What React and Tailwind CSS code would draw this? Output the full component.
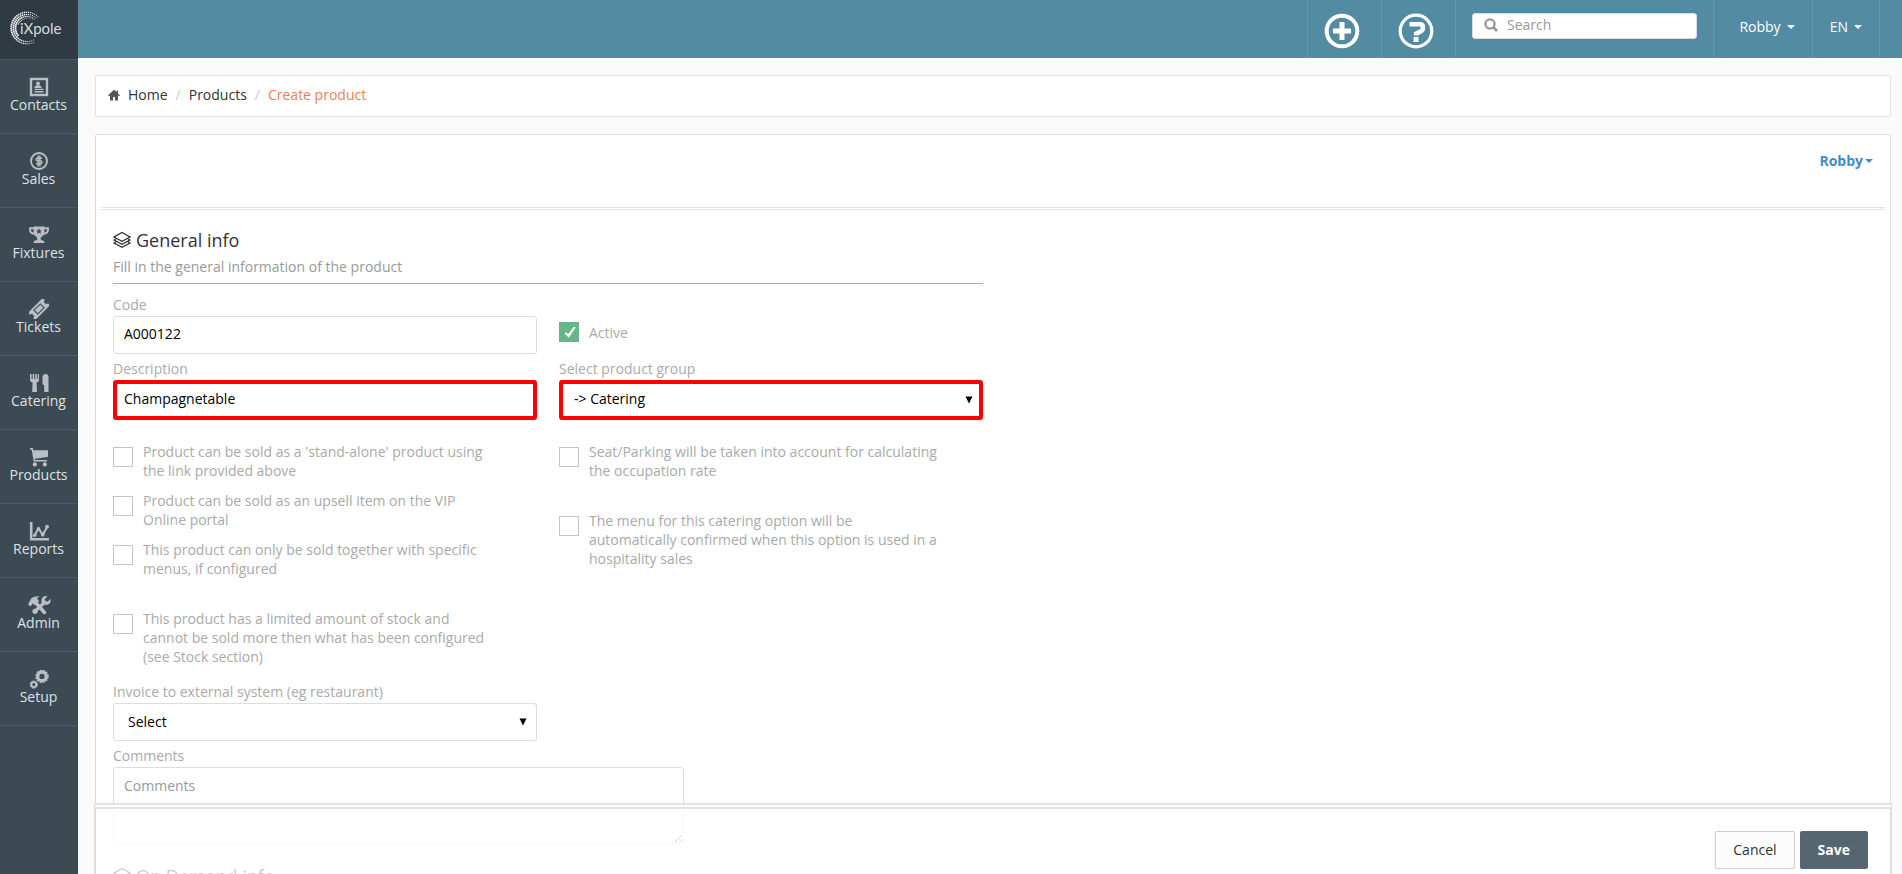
import React, { useState } from 'react';

const iconProps = {
  viewBox: '0 0 20 20',
  className: 'w-5 h-5 text-[#b9bfc4]',
  fill: 'none',
  stroke: 'currentColor',
  'aria-hidden': true,
};

const ContactsIcon = () => (
  <svg {...iconProps}>
    <rect x="2" y="2" width="16" height="16" strokeWidth="2.4" />
    <g fill="currentColor" stroke="none">
      <circle cx="9" cy="6.4" r="2" />
      <path d="M5.5 11V9.6L8 8.3h2l2.5 1.3V11zM5.5 11.8h9v1.3h-9zM5.5 13.9h9v1.5h-9z" />
    </g>
  </svg>
);

const SalesIcon = () => (
  <svg {...iconProps}>
    <circle cx="10" cy="10" r="8" strokeWidth="1.9" />
    <path d="M13 7.2H8.2q-1 0-1 1v.7q0 1 1 1h3.6q1 0 1 1v.9q0 1-1 1H7M9.2 4.6v10.8M10.9 4.6v10.8" strokeWidth="1.4" />
  </svg>
);

const FixturesIcon = () => (
  <svg {...iconProps}>
    <path d="M5.5 3.2H1v1.6c0 2.6 1.8 4 5.3 4M14.5 3.2H19v1.6c0 2.6-1.8 4-5.3 4" strokeWidth="1.9" />
    <path
      d="M4.6 1.5h10.8v5c0 3.3-1.7 5.1-3.6 5.8v3h1.8q1.8.4 2 2.7H4.4q.2-2.3 2-2.7h1.8v-3C6.3 11.6 4.6 9.8 4.6 6.5z"
      fill="currentColor"
      stroke="none"
    />
    <path d="M10 3.2l.9 2 2.1.2-1.6 1.4.5 2.1-1.9-1.1-1.9 1.1.5-2.1L7 5.4l2.1-.2z" fill="#3c4a54" stroke="none" />
  </svg>
);

const TicketsIcon = () => (
  <svg {...iconProps}>
    <g transform="rotate(-45 10 10)">
      <path
        d="M-.5 4.8h21v2.9a2.3 2.3 0 0 0 0 4.6v2.9h-21v-2.9a2.3 2.3 0 0 0 0-4.6z"
        fill="currentColor"
        stroke="none"
      />
      <rect x="5.5" y="7.3" width="9" height="5.4" stroke="#3c4a54" strokeWidth="1.1" />
    </g>
  </svg>
);

const CateringIcon = () => (
  <svg {...iconProps}>
    <g fill="currentColor" stroke="none">
      <path d="M1 1h1.6v5h1V1h1.6v5h1V1h1.6v5h.9V1H10v6q0 2-2.4 2.6L8 19H3.2l.4-9.4Q1 9 1 7z" />
      <path d="M13.5 10.5V3q.8-2 3.3-2t2.7 2.6V19h-4.3v-6.8q-1.7-.2-1.7-1.7z" />
    </g>
  </svg>
);

const ProductsIcon = () => (
  <svg {...iconProps}>
    <path d="M1 1.8h2.2l2.2 12h12.6" strokeWidth="1.5" />
    <path d="M4 3.2h15v6.6L5.2 12z" fill="currentColor" stroke="none" />
    <circle cx="5.8" cy="17.4" r="2.1" fill="currentColor" stroke="none" />
    <circle cx="15.8" cy="17.4" r="2.1" fill="currentColor" stroke="none" />
  </svg>
);

const ReportsIcon = () => (
  <svg {...iconProps}>
    <path d="M2.2 1v17.2H20" strokeWidth="2.6" />
    <path d="M5.5 14.5l4-7 4.2 6.3 4.8-8.3" strokeWidth="2" />
    <g fill="currentColor" stroke="none">
      <circle cx="5.8" cy="14.2" r="1.7" />
      <circle cx="9.5" cy="8" r="1.9" />
      <circle cx="13.7" cy="13.5" r="1.9" />
      <circle cx="18" cy="5.7" r="1.9" />
    </g>
  </svg>
);

const AdminIcon = () => (
  <svg viewBox="0 0 24 20" className="w-6 h-5 text-[#b9bfc4]" fill="none" stroke="currentColor" aria-hidden>
    <path d="M9 8l8.5 9.5" strokeWidth="3.4" strokeLinecap="round" />
    <path d="M1 9.5L4.5 3Q7 1 12.5 1.2L10 3.3l2 3-4 4-2.3-1.8-2.2 3z" fill="currentColor" stroke="none" />
    <path d="M8.3 16L17 8" strokeWidth="3.2" />
    <circle cx="8" cy="16.3" r="2.6" fill="currentColor" stroke="none" />
    <path d="M20.5 1.3l-2.9 3 1 2 2.2.3 2.5-2.8q1 3.7-1.3 5.3-2 1.4-4.5.4L14.5 7.5Q14 4 15.5 2.5q2-1.9 5-1.2z" fill="currentColor" stroke="none" />
  </svg>
);

const SetupIcon = () => (
  <svg {...iconProps}>
    <circle cx="13" cy="7.4" r="4.2" strokeWidth="3.2" />
    <circle cx="13" cy="7.4" r="6" strokeWidth="1.4" strokeDasharray="2.2 .942" />
    <circle cx="4.8" cy="15.6" r="2.5" strokeWidth="2" />
    <circle cx="4.8" cy="15.6" r="3.7" strokeWidth="1" strokeDasharray="1.8 1.106" />
  </svg>
);

const LayersIcon = () => (
  <svg viewBox="0 0 18 18" className="w-[18px] h-[18px] shrink-0" fill="none" stroke="currentColor" strokeWidth="1.2" aria-hidden>
    <path d="M9 1.5L17 6 9 10.2 1 6z" />
    <path d="M3 7.8L1 9l8 4.2L17 9l-2-1.2M3 10.8L1 12l8 4.3 8-4.3-2-1.2" />
  </svg>
);

const HomeIcon = () => (
  <svg viewBox="0 0 12 12" className="w-3 h-3" fill="#555" aria-hidden>
    <path d="M6 .8L0 6.3l.9.9L2 6.3v5.2h3V8h2v3.5h3V6.3l1.1.9.9-.9-2-1.9V1.5H8.5v1.4z" />
  </svg>
);

const Caret = () => (
  <span className="inline-block border-x-4 border-x-transparent border-t-4 border-t-current" />
);

// Puntos del logo: anillos abiertos hacia la derecha, más finos en los extremos
const logoDots = [];
[
  { radius: 9.5, count: 26 },
  { radius: 11.5, count: 28 },
  { radius: 13.6, count: 30 },
  { radius: 15.8, count: 34 },
].forEach(({ radius, count }, ring) => {
  for (let i = 0; i < count; i++) {
    const t = i / (count - 1);
    const angle = ((305 - t * 250 + ring * 3) * Math.PI) / 180;
    const strength = Math.sin(Math.PI * t);
    if (ring === 0 && t > 0.4) continue;
    if (ring === 1 && t > 0.7) continue;
    logoDots.push({
      x: 20 + radius * Math.cos(angle),
      y: 17 + radius * Math.sin(angle),
      r: (ring === 0 ? 0.2 : 0.5) + 0.5 * strength,
    });
  }
});

const Logo = () => (
  <svg viewBox="0 0 60 34" className="w-[60px] h-[34px]" role="img" aria-label="iXpole">
    {logoDots.map((dot, i) => (
      <circle key={i} cx={dot.x} cy={dot.y} r={dot.r} fill="#eceeef" />
    ))}
    <text x="13" y="23" fontFamily="Lato, sans-serif" fontSize="15" fontWeight="400" fill="#d5d9db">
      iXpole
    </text>
  </svg>
);

const menu = [
  { label: 'Contacts', Icon: ContactsIcon },
  { label: 'Sales', Icon: SalesIcon },
  { label: 'Fixtures', Icon: FixturesIcon },
  { label: 'Tickets', Icon: TicketsIcon },
  { label: 'Catering', Icon: CateringIcon },
  { label: 'Products', Icon: ProductsIcon },
  { label: 'Reports', Icon: ReportsIcon },
  { label: 'Admin', Icon: AdminIcon },
  { label: 'Setup', Icon: SetupIcon },
];

const Sidebar = () => (
  <nav className="w-[78px] shrink-0 bg-[#3c4a54]">
    <a href="#" className="flex items-center h-[59px] pl-[7px] pb-1 bg-[#2f3a42]">
      <Logo />
    </a>
    <ul className="border-t border-[#4b5a65]">
      {menu.map(({ label, Icon }) => (
        <li key={label} className="border-b border-[#4b5a65]">
          <a href="#" className="flex flex-col items-center h-[73px] pt-[17px] pr-px text-[#dfe2e4]">
            <Icon />
            <span className="leading-4">{label}</span>
          </a>
        </li>
      ))}
    </ul>
  </nav>
);

const Header = () => (
  <header className="flex justify-end h-[58px] pr-[22px] bg-[#538ba2] text-white">
    <button type="button" aria-label="Add" className="w-[74px] pt-1 pr-1.5 flex items-center justify-center border-l border-[#6799ac]">
      <svg viewBox="0 0 36 36" className="w-9 h-9" fill="none" stroke="currentColor">
        <circle cx="18" cy="18" r="15.3" strokeWidth="4" />
        <path d="M18 9v18M9 18h18" strokeWidth="5" />
      </svg>
    </button>
    <button type="button" aria-label="Help" className="w-[74px] pt-1 pr-1.5 flex items-center justify-center border-l border-[#6799ac]">
      <svg viewBox="0 0 36 36" className="w-9 h-9" fill="none" stroke="currentColor">
        <circle cx="18" cy="18" r="15.8" strokeWidth="3.2" />
        <path d="M11.5 11.3H22q2.8 0 2.8 2.4v2.3q0 1.200-1.400 2l-5.200 2.600v1.800" strokeWidth="4.6" />
        <path d="M15.5 24h5v5h-5z" fill="currentColor" stroke="none" />
      </svg>
    </button>
    <div className="w-[258px] px-4 pt-[13px] border-l border-[#6799ac]">
      <label className="flex items-center h-[26px] pl-[11px] pr-3 gap-[9px] pb-0.5 bg-white rounded-[3px] border border-[#dddddd]">
        <svg viewBox="0 0 14 14" className="w-3.5 h-3.5 shrink-0" fill="none" stroke="#999" aria-hidden>
          <circle cx="6" cy="6" r="4.6" strokeWidth="2.4" />
          <path d="M9.3 9.3l3.7 3.7" strokeWidth="2.8" />
        </svg>
        <input
          type="search"
          aria-label="Search"
          placeholder="Search"
          className="w-full min-w-0 outline-none text-[#555] placeholder-[#999]"
        />
      </label>
    </div>
    <button type="button" className="w-[99px] pb-1 pl-2 flex items-center justify-center gap-1.5 border-l border-[#6799ac]">
      Robby <Caret />
    </button>
    <button type="button" className="w-[68px] pb-1 flex items-center justify-center gap-1.5 border-x border-[#6799ac]">
      EN <Caret />
    </button>
  </header>
);

const SectionTitle = ({ children }) => (
  <h2 className="flex items-center gap-[5px] text-lg leading-6 font-medium text-[#333]">
    <LayersIcon />
    {children}
  </h2>
);

const Field = ({ id, label, children }) => (
  <div>
    <label htmlFor={id} className="block leading-[22px] text-[#aaa]">
      {label}
    </label>
    {children}
  </div>
);

const Check = ({ id, label, checked = false, inline = false }) => {
  const [on, setOn] = useState(checked);

  return (
    <div className={inline ? 'flex items-center gap-2.5' : 'flex items-start gap-2.5'}>
      <span className={inline ? 'relative flex' : 'relative flex mt-[5px]'}>
        <input
          type="checkbox"
          id={id}
          checked={on}
          onChange={(e) => setOn(e.target.checked)}
          className="appearance-none w-5 h-5 bg-white border border-[#c4c4c4] checked:bg-[#65b688] checked:border-[#65b688]"
        />
        {on && (
          <svg viewBox="0 0 20 20" className="absolute inset-0 w-5 h-5 pointer-events-none" aria-hidden>
            <path d="M5.5 11.2l1.7-1 1.9 2L14.5 5l2.3.3L9.8 15.8z" fill="#fff" />
          </svg>
        )}
      </span>
      <label htmlFor={id} className="max-w-[352px] leading-[19px] text-[#aaa]">
        {label}
      </label>
    </div>
  );
};

const Select = ({ id, options, className }) => (
  <div className="relative">
    <select id={id} className={`appearance-none w-full bg-white text-black ${className}`}>
      {options.map((option) => (
        <option key={option}>{option}</option>
      ))}
    </select>
    <svg viewBox="0 0 8 8" className="absolute right-2.5 inset-y-0 my-auto w-2 h-2 pointer-events-none" aria-hidden>
      <path d="M.5.5h7L4 7.5z" fill="#000" />
    </svg>
  </div>
);

const App = () => {
  const [code, setCode] = useState('A000122');
  const [description, setDescription] = useState('Champagnetable');

  return (
    <div className="flex h-screen overflow-hidden bg-[#fafafa] font-['Open_Sans',sans-serif] text-sm">
      <Sidebar />

      <div className="relative flex-1 min-w-0">
        <Header />

        <main className="pl-[17px] pr-[11px] pt-[17px]">
          {/* Breadcrumb */}
          <nav className="flex items-center h-[42px] pl-3 pb-0.5 mb-[17px] bg-white border border-[#e3e3e3] rounded-[2px] text-[#333]">
            <HomeIcon />
            <a href="#" className="ml-2">Home</a>
            <span className="mx-2 text-[#ccc]">/</span>
            <a href="#">Products</a>
            <span className="mx-2 text-[#ccc]">/</span>
            <span className="text-[#e9805c]">Create product</span>
          </nav>

          {/* Panel principal */}
          <div className="px-[5px] pb-20 bg-white border border-[#dddddd] rounded-[2px]">
            <div className="flex justify-end h-[75px] pt-4 pr-3 border-b-3 border-double border-[#e3e3e3]">
              <button type="button" className="flex items-center gap-0.5 h-5 font-bold text-[#428bca]">
                Robby <Caret />
              </button>
            </div>

            <form className="w-1/2 pl-3 pr-2.5 pt-[18px]">
              <SectionTitle>General info</SectionTitle>
              <p className="mt-1 pb-[5px] leading-[22px] text-[#999] border-b border-[#ffa500]">
                Fill in the general information of the product
              </p>

              <div className="grid grid-cols-2 gap-x-[22px] gap-y-1 mt-2.5">
                <Field id="code" label="Code">
                  <input
                    id="code"
                    type="text"
                    value={code}
                    onChange={(e) => setCode(e.target.value)}
                    className="block w-full h-[38px] px-2.5 pb-1 border border-[#dddddd] rounded-[3px] text-black"
                  />
                </Field>
                <div className="pt-7">
                  <Check id="active" label="Active" checked inline />
                </div>
                <Field id="description" label="Description">
                  <input
                    id="description"
                    type="text"
                    value={description}
                    onChange={(e) => setDescription(e.target.value)}
                    className="block w-full h-10 px-[7px] pb-1 border-4 border-[#ff0000] rounded-[3px] text-black"
                  />
                </Field>
                <Field id="group" label="Select product group">
                  <Select
                    id="group"
                    options={['-> Catering']}
                    className="block h-10 px-[11px] pb-0.5 border-4 border-[#ff0000] rounded-[3px]"
                  />
                </Field>
              </div>

              <div className="grid grid-cols-2 gap-x-[22px] mt-[22px]">
                <div className="flex flex-col gap-[11px]">
                  <Check id="standalone" label="Product can be sold as a 'stand-alone' product using the link provided above" />
                  <Check id="upsell" label="Product can be sold as an upsell item on the VIP Online portal" />
                  <Check id="menus" label="This product can only be sold together with specific menus, if configured" />
                  <div className="pt-5">
                    <Check
                      id="stock"
                      label="This product has a limited amount of stock and cannot be sold more then what has been configured (see Stock section)"
                    />
                  </div>
                </div>
                <div className="flex flex-col gap-[31px]">
                  <Check id="seat" label="Seat/Parking will be taken into account for calculating the occupation rate" />
                  <Check
                    id="confirm"
                    label="The menu for this catering option will be automatically confirmed when this option is used in a hospitality sales"
                  />
                </div>
              </div>

              <div className="grid grid-cols-2 gap-x-[22px] mt-[15px]">
                <Field id="invoice" label="Invoice to external system (eg restaurant)">
                  <Select
                    id="invoice"
                    options={['Select']}
                    className="block h-[38px] px-3.5 border border-[#dddddd] rounded-[3px]"
                  />
                </Field>
              </div>

              <div className="mt-1">
                <Field id="comments" label="Comments">
                  <textarea
                    id="comments"
                    placeholder="Comments"
                    className="block w-[571px] h-[77px] px-2.5 py-2 border border-[#dddddd] rounded-[3px] placeholder-[#999]"
                  />
                </Field>
              </div>

              <div className="mt-5">
                <SectionTitle>On Demand info</SectionTitle>
              </div>
            </form>
          </div>
        </main>

        {/* Barra de acciones */}
        <footer className="absolute left-4 right-2.5 bottom-0 flex justify-end items-start gap-[5px] h-[71px] pt-[22px] pr-[22px] bg-white/75 border-x-2 border-x-[#dddddd] border-t-6 border-t-[#e3e3e3] [border-top-style:double]">
          <button type="button" className="h-[38px] px-[17px] bg-[#fcfcfc] border border-[#cccccc] rounded-[2px] text-[#333]">
            Cancel
          </button>
          <button type="button" className="h-[38px] px-[18px] bg-[#566670] rounded-[2px] font-bold text-white">
            Save
          </button>
        </footer>
      </div>
    </div>
  );
};

export default App;
